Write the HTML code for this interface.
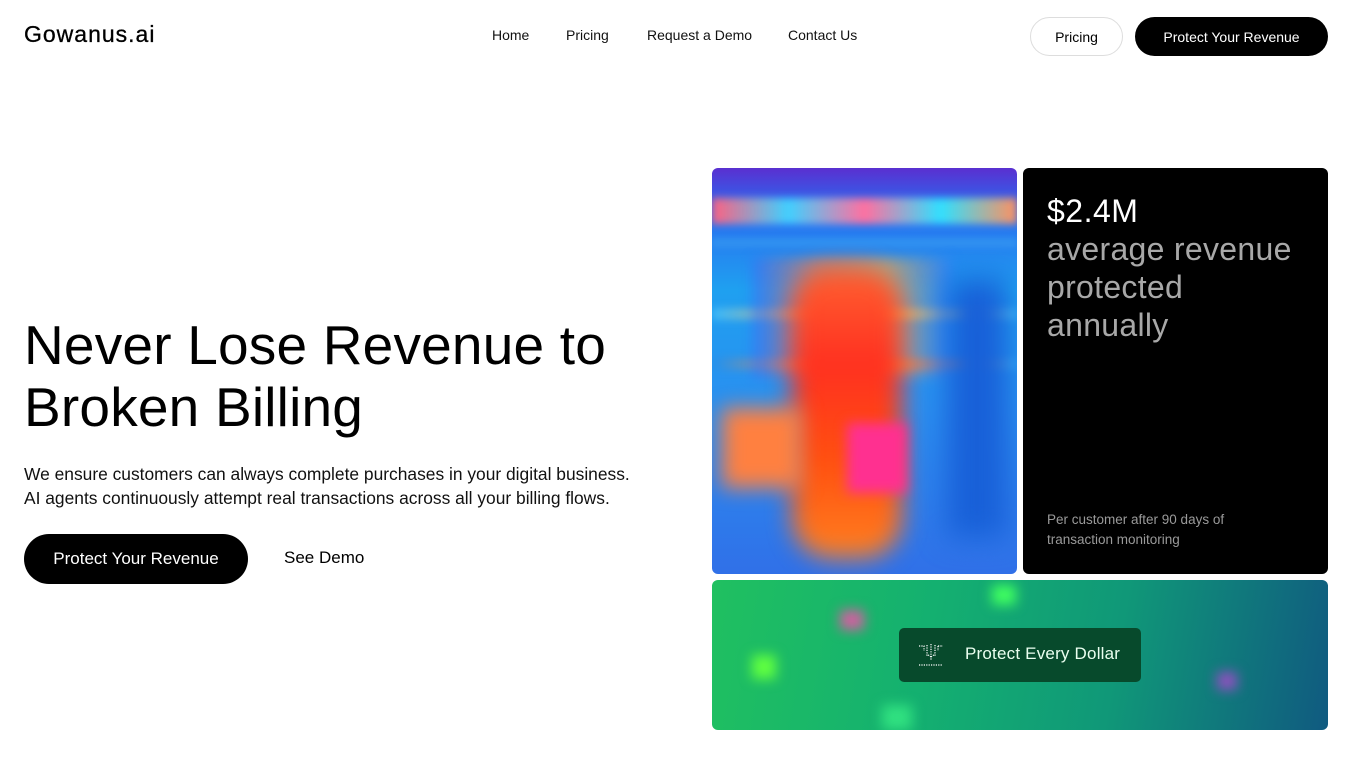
<!DOCTYPE html>
<html><head><meta charset="utf-8"><style>
*{margin:0;padding:0;box-sizing:border-box}
body{width:1352px;height:760px;background:#fff;font-family:"Liberation Sans",sans-serif;color:#000;position:relative;overflow:hidden}
.abs{position:absolute}
.nav a{position:absolute;top:27px;font-size:14px;color:#111;text-decoration:none}
.btn{position:absolute;border-radius:20px;font-size:14px;display:flex;align-items:center;justify-content:center}
.card{position:absolute;border-radius:6px;overflow:hidden}
.blob{position:absolute;filter:blur(6px)}
</style></head><body>
<div class="abs" style="left:24px;top:21px;font-size:23px;letter-spacing:1px;font-weight:500;-webkit-text-stroke:0.3px #000">Gowanus.ai</div>
<div class="nav"><a style="left:492px">Home</a><a style="left:566px">Pricing</a><a style="left:647px">Request a Demo</a><a style="left:788px">Contact Us</a></div>
<div class="btn" style="left:1030px;top:17px;width:93px;height:39px;border:1px solid #ddd">Pricing</div>
<div class="btn" style="left:1135px;top:17px;width:193px;height:39px;background:#000;color:#fff">Protect Your Revenue</div>

<div class="abs" style="left:24px;top:314px;font-size:55px;line-height:62px;letter-spacing:0.2px">Never Lose Revenue to<br>Broken Billing</div>
<div class="abs" style="left:24px;top:462px;font-size:17.4px;line-height:24px;color:#111">We ensure customers can always complete purchases in your digital business.<br>AI agents continuously attempt real transactions across all your billing flows.</div>
<div class="btn" style="left:24px;top:534px;width:224px;height:50px;border-radius:25px;background:#000;color:#fff;font-size:17px">Protect Your Revenue</div>
<div class="abs" style="left:284px;top:548px;font-size:17px">See Demo</div>

<div class="card" style="left:712px;top:168px;width:305px;height:406px;background:linear-gradient(180deg,#5a2fd0 0%,#2a6cf0 10%,#1fa0f0 30%,#2a8ef0 60%,#3070e8 100%)">
 <div class="blob" style="left:0;top:30px;width:305px;height:26px;background:linear-gradient(90deg,#ff6080,#40d0ff,#ff70a0,#30e0ff,#ff9060);filter:blur(4px)"></div>
 <div class="blob" style="left:0;top:70px;width:305px;height:10px;background:#3090f0;filter:blur(3px)"></div>
 <div class="blob" style="left:0;top:140px;width:305px;height:12px;background:linear-gradient(90deg,#40c0ff,#ffb050,#ffd060,#40c0ff);filter:blur(4px);opacity:.8"></div>
 <div class="blob" style="left:0;top:190px;width:305px;height:12px;background:linear-gradient(90deg,#2090f0,#ff9040,#ff7030,#30b0ff);filter:blur(4px);opacity:.8"></div>
 <div class="blob" style="left:40px;top:90px;width:200px;height:120px;background:linear-gradient(90deg,#3070ff,#ff8040,#ffb040,#3080ff);opacity:.6"></div>
 <div class="blob" style="left:80px;top:100px;width:110px;height:290px;background:linear-gradient(180deg,#ff6030,#ff3020,#ff5010,#ff8020);border-radius:40px;filter:blur(12px)"></div>
 <div class="blob" style="left:10px;top:240px;width:80px;height:80px;background:#ff8040;filter:blur(10px)"></div>
 <div class="blob" style="left:135px;top:255px;width:60px;height:70px;background:#ff3090"></div>
 <div class="blob" style="left:235px;top:110px;width:60px;height:260px;background:#1860d8;filter:blur(14px)"></div>
</div>

<div class="card" style="left:1023px;top:168px;width:305px;height:406px;background:#000">
 <div class="abs" style="left:24px;top:24px;font-size:32px;line-height:38px;color:#fff;letter-spacing:0.5px">$2.4M</div>
 <div class="abs" style="left:24px;top:62px;font-size:32px;line-height:38px;color:#a8a8a8;letter-spacing:0.3px">average revenue<br>protected<br>annually</div>
 <div class="abs" style="left:24px;top:342px;font-size:13.5px;line-height:20px;color:#9a9a9a">Per customer after 90 days of<br>transaction monitoring</div>
</div>

<div class="card" style="left:712px;top:580px;width:616px;height:150px;background:linear-gradient(100deg,#20c060 0%,#14b070 35%,#109878 65%,#105a80 100%)">
 <div class="blob" style="left:40px;top:75px;width:24px;height:24px;background:#60ff40"></div>
 <div class="blob" style="left:128px;top:30px;width:24px;height:20px;background:#d060a0"></div>
 <div class="blob" style="left:280px;top:5px;width:24px;height:20px;background:#40ff60"></div>
 <div class="blob" style="left:170px;top:125px;width:30px;height:25px;background:#30e080"></div>
 <div class="blob" style="left:505px;top:92px;width:20px;height:18px;background:#9050c0"></div>
 <div class="abs" style="left:187px;top:48px;width:242px;height:54px;background:#074a2c;border-radius:5px"></div>
 <svg class="abs" style="left:205px;top:63px" width="28" height="26" viewBox="0 0 28 26" stroke="#fff" stroke-width="1.2" stroke-dasharray="1.2 1.2" fill="none"><path d="M2 3h5v5M10 2v12M14 1v16M14 14l-4 -3M14 14l4-3M18 2v12M21 3h5M21 3v5M2 22h24"/></svg>
 <div class="abs" style="left:253px;top:64px;font-size:17px;color:#eafff0;letter-spacing:0.2px">Protect Every Dollar</div>
</div>
</body></html>
